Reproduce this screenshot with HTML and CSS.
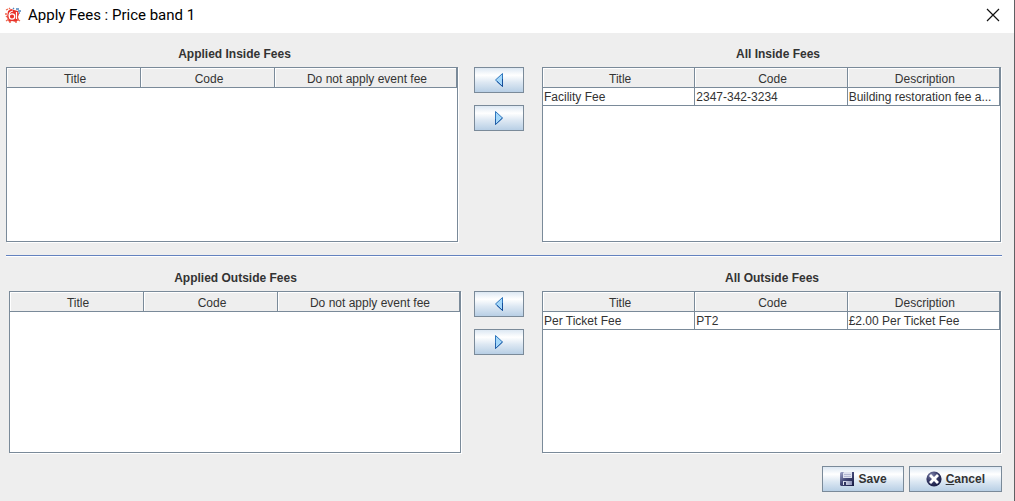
FILE: index.html
```html
<!DOCTYPE html>
<html lang="en">
<head>
  <meta charset="UTF-8">
  <meta name="viewport" content="width=device-width, initial-scale=1.0">
  <title>Apply Fees : Price band 1</title>
  <link rel="stylesheet" href="styles.css">
</head>
<body>
  <div class="dialog">

    <!-- Title bar -->
    <header class="title-bar">
      <svg class="app-icon" width="16" height="16" viewBox="0 0 16 16" aria-hidden="true">
        <path d="M3 4l3-2 3 1 4 1 1 3-1 3 1 3-2 1-1 1-4-1-3 1-1-2-1-3z" fill="#e8302a"/>
        <path d="M1 3l2-1M4 1l1 1M0 7h2M1 10l1-1M1 14l3-2M12 12l3 2M4 15h2M10 15h2" stroke="#ee6a50" stroke-width="1.3"/>
        <path d="M8 1l1 1M11 2h3M13 4h3M14 6h1" stroke="#4f86bd" stroke-width="1.3"/>
        <path d="M8 4C5 4.500 3.800 7 4.200 9.500" stroke="#fff" stroke-width="1.2" fill="none"/>
        <circle cx="7" cy="9.500" r="2.700" fill="none" stroke="#fff" stroke-width="1.2"/>
        <path d="M11.500 5v7" stroke="#fff" stroke-width="1.2"/>
      </svg>
      <h1>Apply Fees : Price band 1</h1>
      <button type="button" class="close" aria-label="Close">
        <svg width="14" height="14" viewBox="0 0 14 14" aria-hidden="true">
          <path d="M1 1l12 12M13 1L1 13" stroke="#111" stroke-width="1.2" fill="none"/>
        </svg>
      </button>
    </header>

    <!-- Inside fees -->
    <section class="fees inside">
      <div class="panel applied">
        <h2 id="applied-inside">Applied Inside Fees</h2>
        <div class="pane">
          <table class="applied-table" aria-labelledby="applied-inside">
            <thead>
              <tr><th>Title</th><th>Code</th><th class="wide">Do not apply event fee</th></tr>
            </thead>
          </table>
        </div>
      </div>
      <div class="move">
        <button type="button" class="btn" aria-label="Apply inside fee">
          <svg width="10" height="16" viewBox="0 0 10 16" aria-hidden="true">
            <path d="M8.500 1.500v13L1.500 8z" fill="#a5d8fa" stroke="#2f76bd"/>
            <path d="M8.500 7v7.500L3 9.400" fill="none" stroke="#164f9b"/>
          </svg>
        </button>
        <button type="button" class="btn" aria-label="Remove inside fee">
          <svg width="10" height="16" viewBox="0 0 10 16" aria-hidden="true">
            <path d="M1.500 1.500v13L8.500 8z" fill="#a5d8fa" stroke="#2f76bd"/>
            <path d="M1.500 9v5.500L8.500 8" fill="none" stroke="#2560a8"/>
          </svg>
        </button>
      </div>
      <div class="panel all">
        <h2 id="all-inside">All Inside Fees</h2>
        <div class="pane">
          <table aria-labelledby="all-inside">
            <thead>
              <tr><th>Title</th><th>Code</th><th>Description</th></tr>
            </thead>
            <tbody>
              <tr><td>Facility Fee</td><td>2347-342-3234</td><td>Building restoration fee a...</td></tr>
            </tbody>
          </table>
        </div>
      </div>
    </section>

    <hr>

    <!-- Outside fees -->
    <section class="fees outside">
      <div class="panel applied">
        <h2 id="applied-outside">Applied Outside Fees</h2>
        <div class="pane">
          <table class="applied-table" aria-labelledby="applied-outside">
            <thead>
              <tr><th>Title</th><th>Code</th><th class="wide">Do not apply event fee</th></tr>
            </thead>
          </table>
        </div>
      </div>
      <div class="move">
        <button type="button" class="btn" aria-label="Apply outside fee">
          <svg width="10" height="16" viewBox="0 0 10 16" aria-hidden="true">
            <path d="M8.500 1.500v13L1.500 8z" fill="#a5d8fa" stroke="#2f76bd"/>
            <path d="M8.500 7v7.500L3 9.400" fill="none" stroke="#164f9b"/>
          </svg>
        </button>
        <button type="button" class="btn" aria-label="Remove outside fee">
          <svg width="10" height="16" viewBox="0 0 10 16" aria-hidden="true">
            <path d="M1.500 1.500v13L8.500 8z" fill="#a5d8fa" stroke="#2f76bd"/>
            <path d="M1.500 9v5.500L8.500 8" fill="none" stroke="#2560a8"/>
          </svg>
        </button>
      </div>
      <div class="panel all">
        <h2 id="all-outside">All Outside Fees</h2>
        <div class="pane">
          <table aria-labelledby="all-outside">
            <thead>
              <tr><th>Title</th><th>Code</th><th>Description</th></tr>
            </thead>
            <tbody>
              <tr><td>Per Ticket Fee</td><td>PT2</td><td>£2.00 Per Ticket Fee</td></tr>
            </tbody>
          </table>
        </div>
      </div>
    </section>

    <!-- Actions -->
    <footer class="actions">
      <button type="button" class="btn">
        <svg width="16" height="16" viewBox="0 0 16 16" aria-hidden="true">
          <defs>
            <linearGradient id="disk" x1="0" y1="0" x2="1" y2="1">
              <stop offset="0" stop-color="#a9aed0"/>
              <stop offset="0.45" stop-color="#454a79"/>
              <stop offset="1" stop-color="#15183f"/>
            </linearGradient>
            <linearGradient id="shutter" x1="0" y1="0" x2="1" y2="0">
              <stop offset="0" stop-color="#e4e7f3"/>
              <stop offset="1" stop-color="#8c91b8"/>
            </linearGradient>
          </defs>
          <path d="M1 2l1-1h13v14H2l-1-1z" fill="url(#disk)"/>
          <path d="M5 1h8v6H4V2z" fill="#dfe2ef"/>
          <path d="M5 3h7v1H5zM5 5h7v1H5z" fill="#b4b8d2"/>
          <path d="M4 10h9v4H4z" fill="url(#shutter)"/>
          <path d="M5 11h2v3H5z" fill="#30345f"/>
        </svg>
        <span>Save</span>
      </button>
      <button type="button" class="btn" accesskey="c">
        <svg width="16" height="16" viewBox="0 0 16 16" aria-hidden="true">
          <defs>
            <radialGradient id="ball" cx="0.35" cy="0.25" r="0.8">
              <stop offset="0" stop-color="#7c80a8"/>
              <stop offset="0.5" stop-color="#383c69"/>
              <stop offset="1" stop-color="#171a40"/>
            </radialGradient>
          </defs>
          <circle cx="8" cy="8" r="7.6" fill="url(#ball)"/>
          <path d="M5 3l3 3 3-3 2 2-3 3 3 3-2 2-3-3-3 3-2-2 3-3-3-3z" fill="#fff"/>
        </svg>
        <span><u>C</u>ancel</span>
      </button>
    </footer>

  </div>
</body>
</html>
```
FILE: styles.css
```css
* {
  margin: 0;
  padding: 0;
  box-sizing: border-box;
}

body {
  font-family: "Liberation Sans", Arial, sans-serif;
  font-size: 12px;
  line-height: 14px;
  color: #333;
  background: #eee;
}

.dialog {
  display: flex;
  flex-direction: column;
  min-height: 100vh;
  border-right: 1px solid #5f6064;
}

/* Title bar */
.title-bar {
  display: flex;
  align-items: center;
  gap: 7px;
  height: 33px;
  padding: 0 14px 4px 5px;
  background: #fff;
}

.title-bar h1 {
  flex: 1;
  font-family: "Segoe UI", Roboto, sans-serif;
  font-size: 15px;
  font-weight: normal;
  line-height: 20px;
  color: #000;
}

.close {
  display: flex;
  border: none;
  background: none;
}

/* Fee lists */
.fees {
  display: grid;
  grid-template-columns: 456fr 80px 460fr;
  flex: 1 1 210px;
  padding: 0 12px 0 6px;
}

.outside {
  flex-basis: 197px;
}

.panel {
  display: flex;
  flex-direction: column;
}

.inside .applied {
  padding-right: 3px;
}

.outside .applied {
  padding-left: 3px;
}

.panel h2 {
  padding: 14px 0 6px;
  font-size: 12px;
  text-align: center;
}

.inside .applied h2 {
  padding-left: 4px;
}

.inside .all h2 {
  padding-left: 12px;
}

.pane {
  flex: 1;
  margin: 0 1px 1px 0;
  border: 1px solid #7a8a99;
  background: #fff;
  box-shadow: 1px 1px 0 #fff;
}

.move {
  display: flex;
  flex-direction: column;
  gap: 12px;
  padding: 34px 18px 0 12px;
}

/* Tables */
table {
  width: 100%;
  table-layout: fixed;
  border-collapse: separate;
  border-spacing: 0;
}

th,
td {
  border-right: 1px solid #7a8a99;
  border-bottom: 1px solid #7a8a99;
  font-weight: normal;
  white-space: nowrap;
  overflow: hidden;
  text-overflow: ellipsis;
}

th {
  height: 20px;
  padding: 2px 0 0 3px;
  background: #eee;
  box-shadow: inset 1px 1px 0 #fff;
  text-align: center;
}

td {
  height: 18px;
  padding-left: 1px;
}

.applied-table .wide {
  width: 182px;
}

/* Buttons */
.btn {
  display: flex;
  align-items: center;
  justify-content: center;
  gap: 4px;
  height: 26px;
  border: 1px solid #7a8a99;
  background: linear-gradient(#dde8f3, #fff 30%, #dde8f3 60%, #b8cfe5);
  font-family: inherit;
  font-size: 12px;
  font-weight: bold;
  color: #333;
}

hr {
  height: 2px;
  margin: 12px 12px 0 6px;
  border: none;
  border-top: 1px solid #6382bf;
  background: #fff;
}

.actions {
  display: flex;
  justify-content: flex-end;
  gap: 5px;
  padding: 12px 12px 9px;
}

.actions .btn {
  padding: 0 16px;
}
```
